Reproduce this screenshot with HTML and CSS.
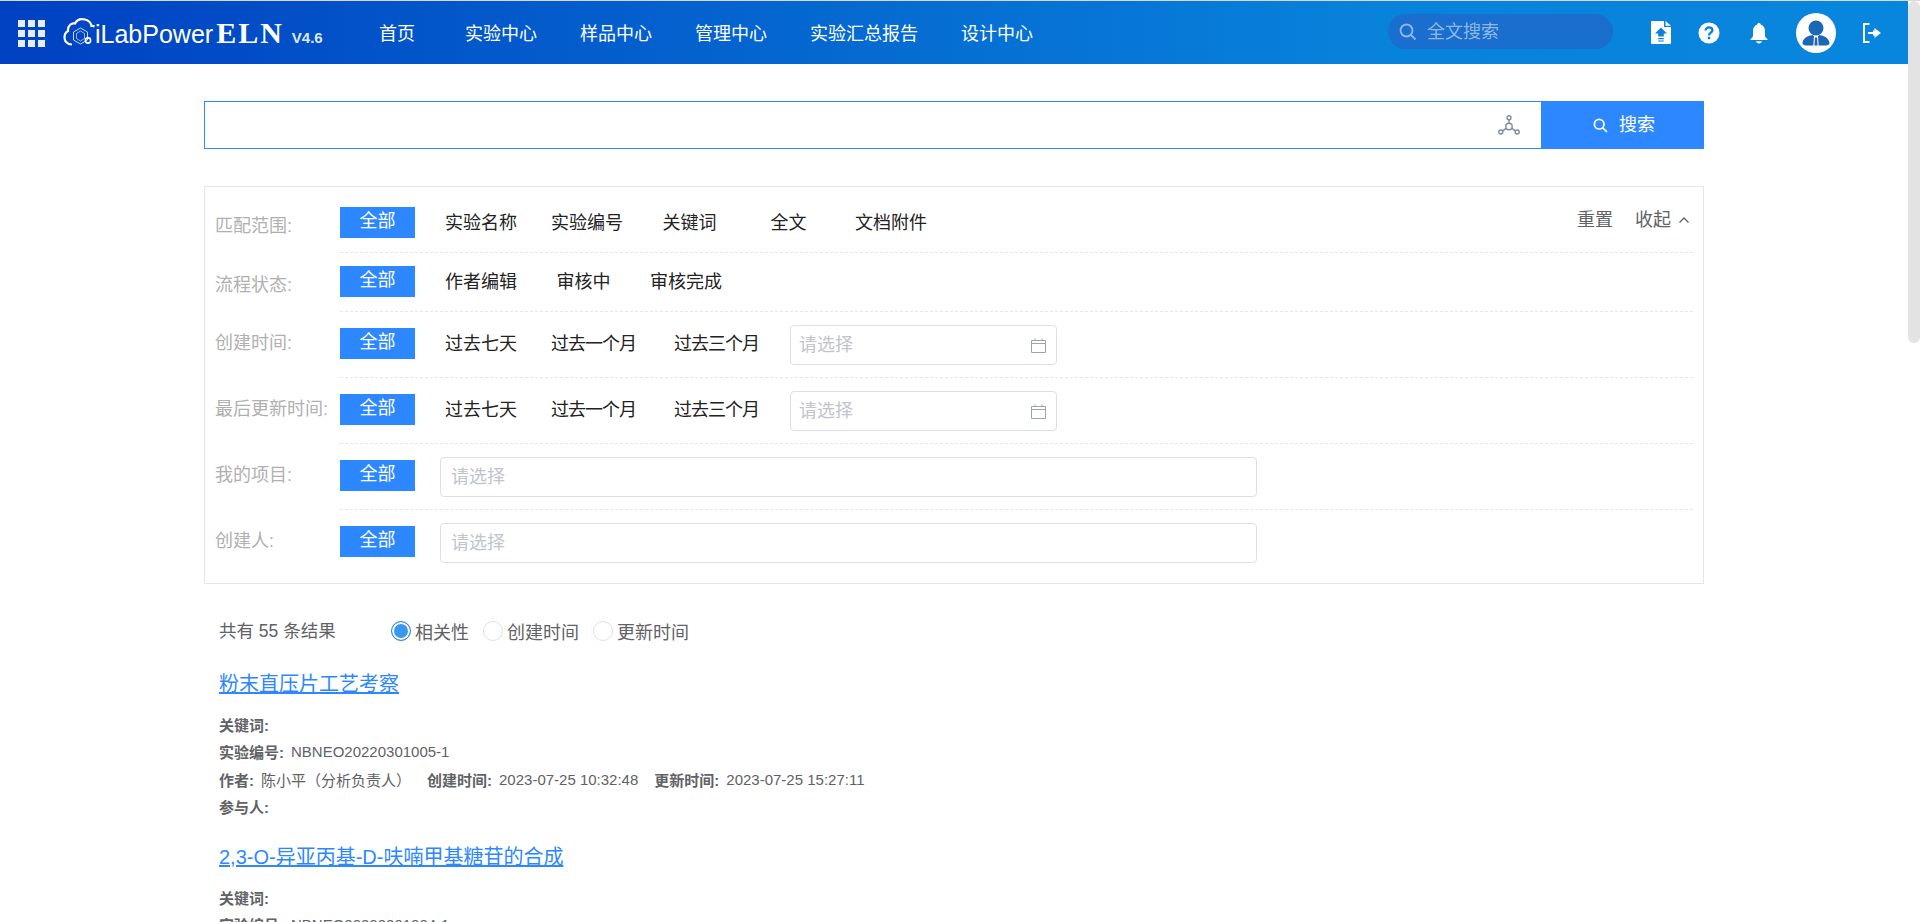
FILE: index.html
```html
<!DOCTYPE html>
<html lang="zh-CN">
<head>
    <meta charset="UTF-8">
    <meta name="viewport" content="width=device-width, initial-scale=1.0">
    <title>iLabPower ELN</title>
    <link rel="stylesheet" href="styles.css">
</head>
<body>
    <header class="topbar">
        <div class="apps-icon">
            <span></span><span></span><span></span>
            <span></span><span></span><span></span>
            <span></span><span></span><span></span>
        </div>
        <div class="logo">
            <svg class="logo-cloud" viewBox="0 0 32 30" width="32" height="30" fill="none" stroke="#fff">
                <path stroke-width="2.2" d="M9 27.5C4 27.5 1.5 24 1.5 20.5C1.5 17 3 15 5 14C4.5 8.5 9 5.5 12 6.5C14 2.5 18 1.5 22 2.5C26 3.5 28 6 28.5 9C29.5 8.8 30.5 9 31.5 9.6"/>
                <path stroke-width="1" opacity="0.8" d="M17.5 11L24.5 15V23L17.5 27L10.5 23V15Z"/>
                <path stroke-width="1" opacity="0.6" d="M17.5 14L21.5 16.5V21.5L17.5 24L13.5 21.5V16.5Z"/>
                <circle stroke-width="1.6" cx="25" cy="23.5" r="2.6"/>
            </svg>
            <span class="logo-name">iLabPower</span>
            <span class="logo-eln">ELN</span>
            <span class="logo-ver">V4.6</span>
        </div>
        <nav class="nav">
            <a class="nav-home" href="#">首页</a>
            <a href="#">实验中心</a>
            <a href="#">样品中心</a>
            <a href="#">管理中心</a>
            <a href="#">实验汇总报告</a>
            <a href="#">设计中心</a>
        </nav>
        <div class="top-search">
            <svg viewBox="0 0 18 18" width="18" height="18" fill="none" stroke="#8fb8e8" stroke-width="1.8">
                <circle cx="7.5" cy="7.5" r="6"/>
                <path d="M12 12L16.5 16.5"/>
            </svg>
            <span>全文搜索</span>
        </div>
        <div class="top-icons">
            <svg viewBox="0 0 20 23" width="20" height="23">
                <path fill="#fff" d="M1 0H13V6H20V22A1 1 0 0 1 19 23H1A1 1 0 0 1 0 22V1A1 1 0 0 1 1 0ZM14.5 0L20 4.8H14.5Z"/>
                <path fill="#0a7fdb" d="M10 6.5L16 12.5H12.8V15.5H7.2V12.5H4Z"/>
                <path fill="#0a7fdb" d="M7.2 17H12.8V18.2H7.2ZM7.2 19.4H12.8V20.6H7.2Z"/>
            </svg>
            <svg viewBox="0 0 22 22" width="22" height="22">
                <circle fill="#fff" cx="11" cy="11" r="10.5"/>
                <path fill="none" stroke="#0a7fdb" stroke-width="2.3" d="M7.6 8.6C7.6 6.6 9.2 5.4 11 5.4C12.9 5.4 14.4 6.6 14.4 8.3C14.4 10.6 11 10.6 11 13.4"/>
                <rect fill="#0a7fdb" x="9.8" y="14.8" width="2.4" height="2.4"/>
            </svg>
            <svg class="icon-bell" viewBox="0 0 22 22" width="22" height="22">
                <path fill="#fff" d="M11 1C12 1 12.7 1.7 12.7 2.6C15.6 3.4 17 6 17 9V13.5C17 15 18 16 19.5 17V18H2.5V17C4 16 5 15 5 13.5V9C5 6 6.4 3.4 9.3 2.6C9.3 1.7 10 1 11 1Z"/>
                <path fill="#fff" d="M8 19.2H14C13.6 20.6 12.5 21.4 11 21.4C9.5 21.4 8.4 20.6 8 19.2Z"/>
            </svg>
            <svg viewBox="0 0 40 40" width="40" height="40">
                <circle fill="#fff" cx="20" cy="20" r="20"/>
                <circle fill="#1c68b4" cx="20" cy="15" r="7.5"/>
                <path fill="#1c68b4" d="M6.5 30C7 25 12 22.5 17 22L18 23.5L17.3 32.5H10C8 32.5 6.5 31.5 6.5 30ZM33.5 30C33 25 28 22.5 23 22L22 23.5L22.7 32.5H30C32 32.5 33.5 31.5 33.5 30Z"/>
                <path fill="#1c68b4" d="M19 24.5H21L21.6 32.5H18.4Z"/>
            </svg>
            <svg viewBox="0 0 18 20" width="18" height="20" fill="none" stroke="#fff" stroke-width="2">
                <path d="M6.5 1H1V19H6.5"/>
                <path d="M5 10H14"/>
                <path fill="#fff" stroke="none" d="M11.5 5L18 10L11.5 15V12.5H10V7.5H11.5Z"/>
            </svg>
        </div>
    </header>

    <main class="container">
        <div class="search-bar">
            <div class="search-field">
                <input type="text" class="search-input">
                <svg viewBox="0 0 22 20" width="22" height="20" fill="none" stroke="#7f8aa3" stroke-width="1.4">
                    <circle cx="11" cy="2.8" r="2"/>
                    <circle cx="11" cy="11.5" r="3.2"/>
                    <circle cx="2.8" cy="17" r="2"/>
                    <circle cx="19.2" cy="17" r="2"/>
                    <path d="M11 4.8V8.3M8.3 13.3L4.5 15.9M13.7 13.3L17.5 15.9"/>
                </svg>
            </div>
            <button class="search-btn">
                <svg viewBox="0 0 15 15" width="15" height="15" fill="none" stroke="#fff" stroke-width="1.7">
                    <circle cx="6.2" cy="6.2" r="4.8"/>
                    <path d="M9.8 9.8L14 14"/>
                </svg>
                <span>搜索</span>
            </button>
        </div>

        <section class="filter-box">
            <div class="filter-row filter-first">
                <div class="filter-label">匹配范围:</div>
                <div class="filter-body">
                    <span class="all-btn">全部</span>
                    <span class="option">实验名称</span>
                    <span class="option">实验编号</span>
                    <span class="option">关键词</span>
                    <span class="option">全文</span>
                    <span class="option">文档附件</span>
                    <div class="filter-actions">
                        <span>重置</span>
                        <span class="collapse">收起
                            <svg viewBox="0 0 12 8" width="12" height="8" fill="none" stroke="#606266" stroke-width="1.3">
                                <path d="M1.5 6.5L6 2L10.5 6.5"/>
                            </svg>
                        </span>
                    </div>
                </div>
            </div>
            <div class="filter-row filter-short">
                <div class="filter-label">流程状态:</div>
                <div class="filter-body">
                    <span class="all-btn">全部</span>
                    <span class="option">作者编辑</span>
                    <span class="option">审核中</span>
                    <span class="option">审核完成</span>
                </div>
            </div>
            <div class="filter-row filter-tall">
                <div class="filter-label">创建时间:</div>
                <div class="filter-body">
                    <span class="all-btn">全部</span>
                    <span class="option">过去七天</span>
                    <span class="option option-month">过去一个月</span>
                    <span class="option option-month">过去三个月</span>
                    <div class="date-input">
                        <input type="text" placeholder="请选择">
                        <svg viewBox="0 0 15 15" width="15" height="15" fill="none" stroke="#9aa3b5">
                            <path d="M.5 2.5H14.5V14.5H.5ZM.5 5.5H14.5M4 .5V3M11 .5V3"/>
                        </svg>
                    </div>
                </div>
            </div>
            <div class="filter-row filter-tall">
                <div class="filter-label">最后更新时间:</div>
                <div class="filter-body">
                    <span class="all-btn">全部</span>
                    <span class="option">过去七天</span>
                    <span class="option option-month">过去一个月</span>
                    <span class="option option-month">过去三个月</span>
                    <div class="date-input">
                        <input type="text" placeholder="请选择">
                        <svg viewBox="0 0 15 15" width="15" height="15" fill="none" stroke="#9aa3b5">
                            <path d="M.5 2.5H14.5V14.5H.5ZM.5 5.5H14.5M4 .5V3M11 .5V3"/>
                        </svg>
                    </div>
                </div>
            </div>
            <div class="filter-row filter-tall">
                <div class="filter-label">我的项目:</div>
                <div class="filter-body">
                    <span class="all-btn">全部</span>
                    <input type="text" class="wide-input" placeholder="请选择">
                </div>
            </div>
            <div class="filter-row filter-tall filter-last">
                <div class="filter-label">创建人:</div>
                <div class="filter-body">
                    <span class="all-btn">全部</span>
                    <input type="text" class="wide-input" placeholder="请选择">
                </div>
            </div>
        </section>

        <section class="results">
            <div class="result-head">
                <span class="result-count">共有 55 条结果</span>
                <label class="radio radio-on"><span class="radio-dot"></span>相关性</label>
                <label class="radio"><span class="radio-dot"></span>创建时间</label>
                <label class="radio"><span class="radio-dot"></span>更新时间</label>
            </div>

            <article class="result">
                <a class="result-title" href="#">粉末直压片工艺考察</a>
                <div class="meta"><b>关键词:</b></div>
                <div class="meta"><b>实验编号:</b>NBNEO20220301005-1</div>
                <div class="meta">
                    <b>作者:</b><span class="meta-value">陈小平（分析负责人）</span>
                    <b>创建时间:</b><span class="meta-value">2023-07-25 10:32:48</span>
                    <b>更新时间:</b><span>2023-07-25 15:27:11</span>
                </div>
                <div class="meta"><b>参与人:</b></div>
            </article>

            <article class="result">
                <a class="result-title" href="#">2,3-O-异亚丙基-D-呋喃甲基糖苷的合成</a>
                <div class="meta"><b>关键词:</b></div>
                <div class="meta"><b>实验编号:</b>NBNEO20220301004-1</div>
            </article>
        </section>
    </main>

    <div class="scroll-thumb"></div>
</body>
</html>
```

FILE: styles.css
```css
body {
    margin: 0;
    padding-right: 12px;
    border-top: 1px solid #d9d9d9;
    background-color: #fff;
    font-family: "Liberation Sans", "Noto Sans CJK SC", sans-serif;
    font-size: 18px;
    color: #222;
}

input {
    font-family: inherit;
    font-size: 18px;
    outline: none;
}

input::placeholder {
    color: #c0c4cc;
}

svg {
    display: block;
    flex-shrink: 0;
}

.scroll-thumb {
    position: fixed;
    top: 1px;
    right: 0;
    width: 12px;
    height: 342px;
    border-radius: 6px;
    background-color: #e3e3e3;
}

.topbar {
    display: flex;
    align-items: center;
    height: 63px;
    padding: 0 27px 0 18px;
    background: linear-gradient(90deg, #0041c2, #0883db 73%, #0885dc);
    color: #fff;
}

.apps-icon {
    display: grid;
    grid-template-columns: repeat(3, 7px);
    grid-auto-rows: 7px;
    gap: 3px;
    margin-right: 18px;
    margin-top: 1px;
}

.apps-icon span {
    background-color: #e6edf9;
}

.logo {
    display: flex;
    align-items: baseline;
    width: 316px;
    flex-shrink: 0;
}

.logo-cloud {
    align-self: center;
    margin-top: -2px;
}

.logo-name {
    font-size: 25px;
}

.logo-eln {
    margin-left: 3px;
    font-family: "Liberation Serif", serif;
    font-size: 30px;
    font-weight: bold;
    letter-spacing: 2px;
}

.logo-ver {
    margin-left: 8px;
    font-size: 15px;
    font-weight: bold;
    color: #dfe9f8;
}

.nav {
    display: flex;
    gap: 43px;
    padding-bottom: 2px;
}

.nav a {
    color: #fff;
    text-decoration: none;
}

.nav .nav-home {
    margin-right: 7px;
}

.top-search {
    display: flex;
    align-items: center;
    gap: 10px;
    width: 225px;
    height: 35px;
    margin-left: auto;
    margin-top: -2px;
    padding-left: 11px;
    box-sizing: border-box;
    border-radius: 18px;
    background-color: #1a6ecd;
    color: #8fb8e8;
}

.top-search span {
    padding-bottom: 3px;
}

.top-icons {
    display: flex;
    align-items: center;
    gap: 27px;
    margin-left: 38px;
}

.icon-bell {
    margin: 0 -1px 0 1px;
}

.container {
    width: 1500px;
    margin: 0 auto;
}

.search-bar {
    display: flex;
    height: 48px;
    margin-top: 37px;
}

.search-field {
    display: flex;
    flex: 1;
    align-items: center;
    padding-right: 21px;
    border: 1px solid #2d88ff;
    border-right: none;
}

.search-input {
    flex: 1;
    height: 100%;
    padding: 0 10px;
    border: none;
}

.search-btn {
    display: flex;
    align-items: center;
    justify-content: center;
    gap: 11px;
    width: 163px;
    padding: 0 0 0 3px;
    border: none;
    background-color: #2d88ff;
    color: #fff;
    font-family: inherit;
    font-size: 18px;
    cursor: pointer;
}

.search-btn span {
    padding-bottom: 4px;
}

.filter-box {
    margin-top: 37px;
    padding: 0 10px 20px;
    border: 1px solid #e6e6e6;
}

.filter-row {
    display: flex;
    align-items: stretch;
}

.filter-label {
    display: flex;
    align-items: center;
    width: 125px;
    flex-shrink: 0;
    padding-bottom: 8px;
    box-sizing: border-box;
    color: #b0b0b0;
    font-size: 18px;
    white-space: nowrap;
}

.filter-short .filter-label {
    padding-top: 1px;
    padding-bottom: 0;
}

.filter-first .filter-label {
    padding-top: 21px;
    padding-bottom: 14px;
}

.filter-last .filter-label {
    padding-top: 4px;
    padding-bottom: 0;
}

.filter-body {
    display: flex;
    flex: 1;
    align-items: center;
    gap: 4px;
    padding: 13px 0 12px;
    border-bottom: 1px dashed #e6e6e6;
}

.filter-first .filter-body {
    padding: 20px 0 14px;
}

.filter-short .filter-body {
    padding-bottom: 14px;
}

.filter-last .filter-body {
    padding-bottom: 0;
    border-bottom: none;
}

.all-btn {
    width: 75px;
    height: 31px;
    margin-right: 11px;
    background-color: #2d88ff;
    color: #fff;
    line-height: 29px;
    text-align: center;
}

.filter-tall .all-btn {
    margin-bottom: 3px;
}

.option {
    min-width: 65px;
    padding: 0 15px 3px;
    text-align: center;
    color: #222;
}

.filter-tall .option {
    padding-bottom: 7px;
}

.filter-tall .option-month {
    padding-right: 19px;
    letter-spacing: -1px;
}

.date-input {
    display: flex;
    align-items: center;
    width: 267px;
    height: 40px;
    margin-left: 8px;
    padding-right: 10px;
    box-sizing: border-box;
    border: 1px solid #dcdfe6;
    border-radius: 4px;
}

.date-input input {
    flex: 1;
    width: 100%;
    padding: 0 8px;
    border: none;
    background: transparent;
}

.wide-input {
    width: 817px;
    height: 40px;
    margin-left: 10px;
    padding: 0 10px;
    box-sizing: border-box;
    border: 1px solid #dcdfe6;
    border-radius: 4px;
}

.filter-actions {
    display: flex;
    align-items: center;
    gap: 22px;
    margin-left: auto;
    margin-top: -9px;
    padding-right: 3px;
    color: #606266;
}

.collapse {
    display: flex;
    align-items: center;
    gap: 7px;
}

.collapse svg {
    margin-top: 3px;
}

.results {
    padding: 30px 15px 0;
}

.result-head {
    display: flex;
    align-items: center;
    height: 36px;
    margin-bottom: 20px;
    color: #606266;
}

.result-count {
    width: 172px;
    padding-bottom: 6px;
    font-size: 17.5px;
}

.radio {
    display: flex;
    align-items: center;
    gap: 4px;
    margin-right: 14px;
    padding-bottom: 3px;
}

.radio-dot {
    width: 18px;
    height: 18px;
    border: 1px solid #dcdfe6;
    border-radius: 50%;
}

.radio-on .radio-dot {
    border-color: #2d88ff;
    background-color: #3a97ee;
    box-shadow: inset 0 0 0 2px #fff;
}

.result {
    margin-bottom: 20px;
}

.result-title {
    display: block;
    width: fit-content;
    height: 28px;
    margin-bottom: 15px;
    color: #2d88ff;
    font-size: 20px;
    line-height: 28px;
    text-decoration: underline;
}

.meta {
    display: flex;
    align-items: center;
    height: 27.5px;
    padding-bottom: 5px;
    box-sizing: border-box;
    color: #606266;
    font-size: 15px;
}

.meta b {
    margin-right: 7px;
}

.meta-value {
    margin-right: 16px;
}
```
